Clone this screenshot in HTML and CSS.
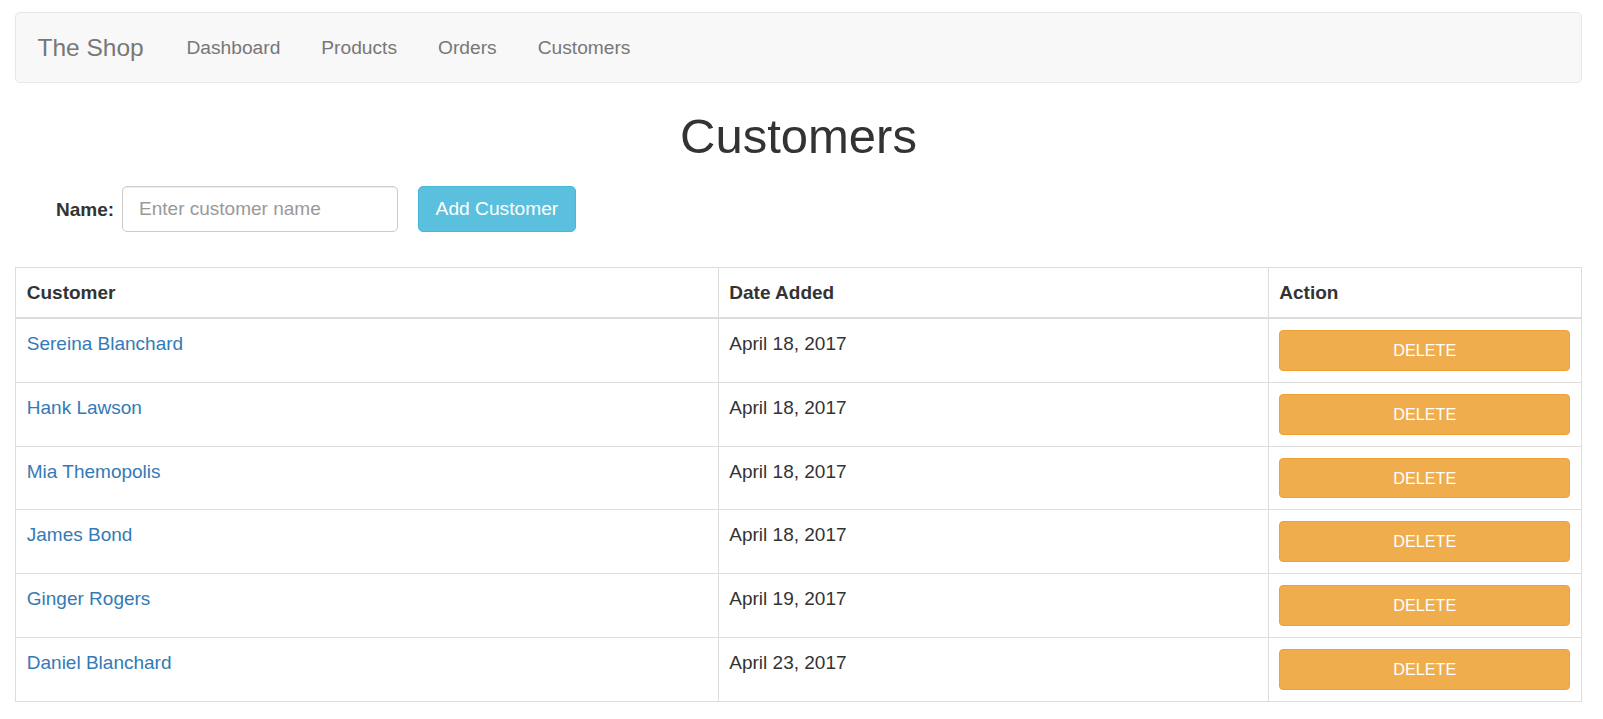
FILE: index.html
```html
<!DOCTYPE html>
<html lang="en">
<head>
<meta charset="utf-8">
<title>The Shop - Customers</title>
<link rel="stylesheet" href="styles.css">
</head>
<body>
<div class="page">
  <nav class="navbar">
    <a class="brand" href="#">The Shop</a>
    <ul class="nav">
      <li><a href="#">Dashboard</a></li>
      <li><a href="#">Products</a></li>
      <li><a href="#">Orders</a></li>
      <li><a href="#">Customers</a></li>
    </ul>
  </nav>

  <h1 class="title">Customers</h1>

  <form class="add-form">
    <label class="add-label" for="cname">Name:</label>
    <input class="add-input" id="cname" type="text" placeholder="Enter customer name">
    <button class="btn-info" type="button">Add Customer</button>
  </form>

  <table class="customers">
    <colgroup>
      <col class="c-name">
      <col class="c-date">
      <col class="c-action">
    </colgroup>
    <thead>
      <tr><th>Customer</th><th>Date Added</th><th>Action</th></tr>
    </thead>
    <tbody>
      <tr><td><a href="#">Sereina Blanchard</a></td><td>April 18, 2017</td><td><button class="btn-delete" type="button">DELETE</button></td></tr>
      <tr><td><a href="#">Hank Lawson</a></td><td>April 18, 2017</td><td><button class="btn-delete" type="button">DELETE</button></td></tr>
      <tr><td><a href="#">Mia Themopolis</a></td><td>April 18, 2017</td><td><button class="btn-delete" type="button">DELETE</button></td></tr>
      <tr><td><a href="#">James Bond</a></td><td>April 18, 2017</td><td><button class="btn-delete" type="button">DELETE</button></td></tr>
      <tr><td><a href="#">Ginger Rogers</a></td><td>April 19, 2017</td><td><button class="btn-delete" type="button">DELETE</button></td></tr>
      <tr><td><a href="#">Daniel Blanchard</a></td><td>April 23, 2017</td><td><button class="btn-delete" type="button">DELETE</button></td></tr>
    </tbody>
  </table>
</div>
</body>
</html>
```

FILE: styles.css
```css
* { box-sizing: border-box; }

html, body {
  margin: 0;
  padding: 0;
  background: #fff;
}

body {
  font-family: "Liberation Sans", Arial, Helvetica, sans-serif;
  font-size: 19px;
  line-height: 27px;
  color: #333;
}

.page {
  padding: 12px 21px 0 15px;
}

/* Navbar */
.navbar {
  display: flex;
  align-items: center;
  height: 71px;
  background: #f8f8f8;
  border: 1px solid #e7e7e7;
  border-radius: 5px;
}

.brand {
  padding: 0 21.5px;
  font-size: 24.5px;
  line-height: 27px;
  color: #777;
  text-decoration: none;
}

.nav {
  display: flex;
  list-style: none;
  margin: 0;
  padding: 0;
}

.nav a {
  display: block;
  padding: 0 20.5px;
  font-size: 19.2px;
  line-height: 27px;
  color: #777;
  text-decoration: none;
}

.nav li:first-child a {
  padding-left: 21.2px;
}

/* Title */
.title {
  margin: 27px 0 0;
  font-size: 49px;
  line-height: 53px;
  font-weight: 400;
  text-align: center;
  color: #333;
}

/* Form */
.add-form {
  display: flex;
  align-items: center;
  margin: 23px 0 0;
  padding-left: 41px;
  height: 46px;
}

.add-label {
  font-weight: 700;
  margin-right: 8px;
  color: #333;
}

.add-input {
  width: 276px;
  height: 46px;
  padding: 0 16px;
  font-family: inherit;
  font-size: 19px;
  color: #555;
  border: 1px solid #ccc;
  border-radius: 5px;
  box-shadow: inset 0 1px 1px rgba(0,0,0,.075);
  outline: none;
}

.add-input::placeholder {
  color: #999;
}

.btn-info {
  margin-left: 20px;
  height: 46px;
  padding: 0 16.5px;
  font-family: inherit;
  font-size: 19.2px;
  color: #fff;
  background: #5bc0de;
  border: 1px solid #46b8da;
  border-radius: 5px;
}

/* Table */
.customers {
  width: 100%;
  margin-top: 35px;
  border-collapse: collapse;
  table-layout: fixed;
  border: 1px solid #ddd;
}

.c-name { width: 702.5px; }
.c-date { width: 550px; }

.customers th,
.customers td {
  padding: 11px 10.8px;
  border: 1px solid #ddd;
  line-height: 27px;
  text-align: left;
  vertical-align: top;
}

.customers th {
  padding-top: 10.9px;
  padding-bottom: 10.9px;
  font-weight: 700;
  vertical-align: bottom;
  border-bottom: 2px solid #ddd;
}

.customers td a {
  color: #337ab7;
  text-decoration: none;
}

.btn-delete {
  display: block;
  width: 100%;
  height: 40.9px;
  padding: 0;
  font-family: inherit;
  font-size: 16.2px;
  color: #fff;
  background: #f0ad4e;
  border: 1px solid #eea236;
  border-radius: 4px;
}
```
